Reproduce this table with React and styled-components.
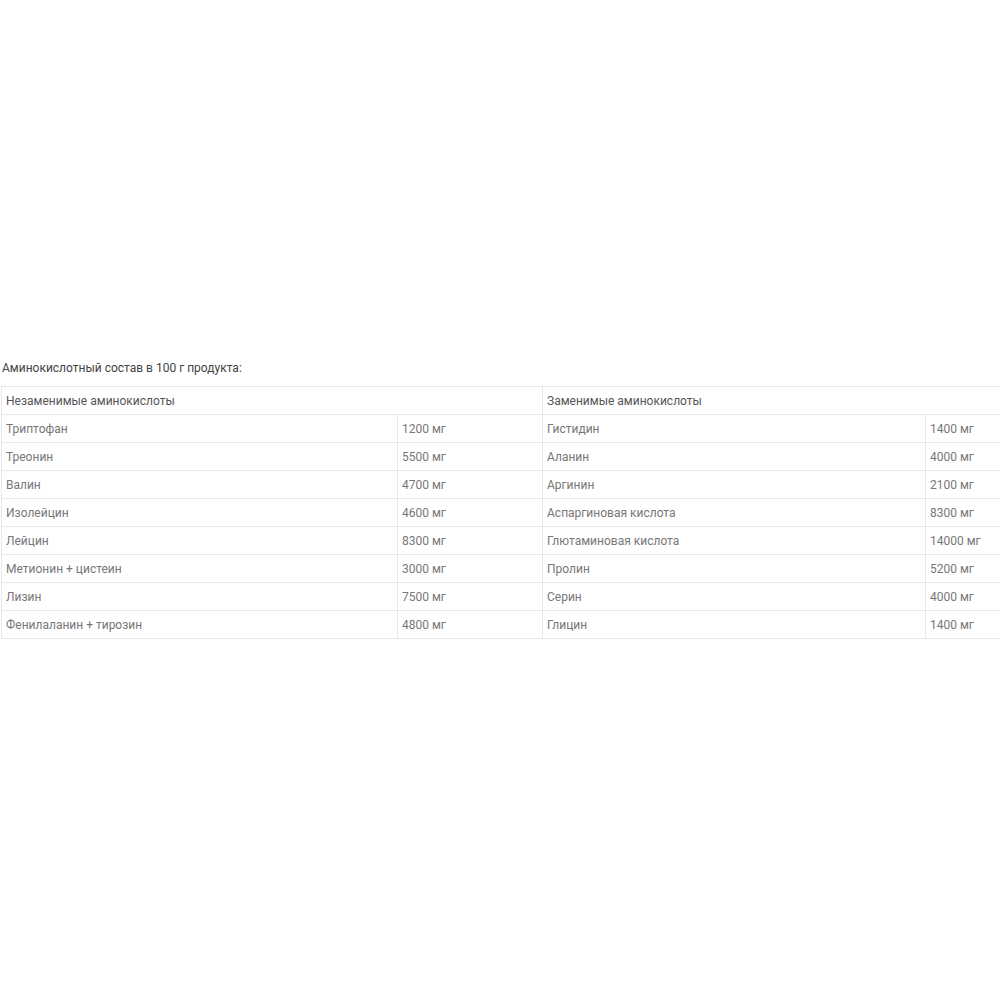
import React from 'react';
import styled, { createGlobalStyle } from 'styled-components';

const GlobalStyle = createGlobalStyle`
  html, body {
    margin: 0;
    padding: 0;
    background: #fff;
    overflow: hidden;
  }
  body {
    font-family: Roboto, 'Liberation Sans', Arial, sans-serif;
  }
`;

const Page = styled.div`
  width: 1000px;
  height: 1000px;
  padding-top: 360px;
  box-sizing: border-box;
  overflow: hidden;
`;

const Caption = styled.p`
  margin: 0 0 10px 2px;
  font-size: 12px;
  line-height: 16px;
  color: #444;
`;

const Table = styled.table`
  width: 1060px;
  margin-left: 1px;
  border-collapse: collapse;
  table-layout: fixed;
  font-size: 12px;
  color: #777;
`;

const Th = styled.th`
  height: 27px;
  padding: 0 4px;
  text-align: left;
  font-weight: 400;
  color: #555;
  border: 1px solid #e8e8e8;
`;

const Td = styled.td`
  height: 27px;
  padding: 0 4px;
  border: 1px solid #e8e8e8;
  white-space: nowrap;
`;

const essential = [
  ['Триптофан', '1200 мг'],
  ['Треонин', '5500 мг'],
  ['Валин', '4700 мг'],
  ['Изолейцин', '4600 мг'],
  ['Лейцин', '8300 мг'],
  ['Метионин + цистеин', '3000 мг'],
  ['Лизин', '7500 мг'],
  ['Фенилаланин + тирозин', '4800 мг'],
];

const replaceable = [
  ['Гистидин', '1400 мг'],
  ['Аланин', '4000 мг'],
  ['Аргинин', '2100 мг'],
  ['Аспаргиновая кислота', '8300 мг'],
  ['Глютаминовая кислота', '14000 мг'],
  ['Пролин', '5200 мг'],
  ['Серин', '4000 мг'],
  ['Глицин', '1400 мг'],
];

const App = () => (
  <Page>
    <GlobalStyle />
    <Caption>Аминокислотный состав в 100 г продукта:</Caption>
    <Table>
      <colgroup>
        <col style={{ width: 396 }} />
        <col style={{ width: 145 }} />
        <col style={{ width: 383 }} />
        <col style={{ width: 136 }} />
      </colgroup>
      <thead>
        <tr>
          <Th colSpan={2}>Незаменимые аминокислоты</Th>
          <Th colSpan={2}>Заменимые аминокислоты</Th>
        </tr>
      </thead>
      <tbody>
        {essential.map((row, i) => (
          <tr key={i}>
            <Td>{row[0]}</Td>
            <Td>{row[1]}</Td>
            <Td>{replaceable[i][0]}</Td>
            <Td>{replaceable[i][1]}</Td>
          </tr>
        ))}
      </tbody>
    </Table>
  </Page>
);

export default App;
